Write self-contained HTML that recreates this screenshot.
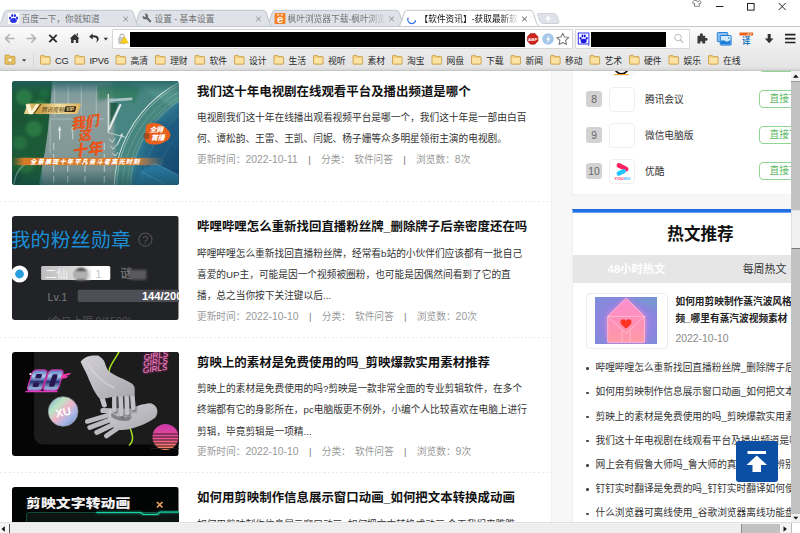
<!DOCTYPE html>
<html lang="zh-CN">
<head>
<meta charset="utf-8">
<title>软件资讯</title>
<style>
*{box-sizing:border-box;margin:0;padding:0}
html,body{width:800px;height:533px;overflow:hidden;background:#fff}
body{font-family:"Liberation Sans","Noto Sans CJK SC",sans-serif;position:relative;color:#222}
.abs{position:absolute}
/* ---------- browser chrome ---------- */
#chrome{position:absolute;left:0;top:0;width:800px;height:71px;background:#fff;z-index:10}
#tabstrip{position:absolute;left:0;top:0;width:800px;height:27px}
#toolbar{position:absolute;left:0;top:26px;width:800px;height:24px;background:linear-gradient(#fcfcfc,#ececec);border-top:1px solid #c4c8ce}
#bookmarks{position:absolute;left:0;top:50px;width:800px;height:21px;background:linear-gradient(#ebebeb 0%,#e4e4e4 85%,#d6d6d6 100%);border-bottom:1px solid #c6c6c6}
.tabtxt{position:absolute;top:12.800px;font-size:8.700px;line-height:12px;color:#727272;white-space:nowrap;overflow:hidden}
.bm{position:absolute;top:5px;font-size:8.8px;line-height:12px;color:#2a2a2a;white-space:nowrap}
.urlbox{position:absolute;top:2px;height:20px;background:#fff;border:1px solid #d6d6d6;border-radius:1px}
.redact{position:absolute;background:#000}
/* ---------- page ---------- */
#page{position:absolute;left:0;top:71px;width:791px;height:451px;background:#f7f7f7;overflow:hidden}
#main{position:absolute;left:0;top:0;width:552px;height:451px;background:#fff;border-right:1px solid #f0f0f0}
.item{position:absolute;left:0;width:552px;height:135.5px}
.item .thumb{position:absolute;left:12px;top:10px;width:166.500px;height:104px;border-radius:3px;overflow:hidden}
.item h3{position:absolute;left:197px;top:10.800px;font-size:12.45px;line-height:20px;font-weight:bold;color:#111;white-space:nowrap}
.item p{position:absolute;left:197px;top:36.100px;width:340px;font-size:9.7px;line-height:21.2px;color:#333;white-space:nowrap}
.item .meta{position:absolute;left:197px;font-size:9.7px;line-height:14px;color:#999;white-space:nowrap}
.item .meta i{font-style:normal;color:#777;margin:0 10.3px}
.item .meta b,.dn{font-weight:normal;font-size:10.4px}
.item .meta u{text-decoration:none;margin-left:1.5px}
.sep{position:absolute;left:0;width:551px;height:1px;background:repeating-linear-gradient(90deg,#ebebeb 0,#ebebeb 2.200px,#fff 2.200px,#fff 4.200px)}
/* sidebar */
#side1{position:absolute;left:571.500px;top:0;width:256.500px;height:124.300px;background:#fff;border-left:1px solid #f1f1f1;border-bottom:1px solid #f1f1f1}
#side2{position:absolute;left:571.500px;top:138px;width:256.500px;height:320px;background:#fff;border-left:1px solid #efefef;border-top:3px solid #1e6fe6}
.rk{position:absolute;left:13.500px;width:16px;height:16px;border-radius:3px;background:#d2d2d2;color:#666;font-size:10.300px;line-height:17.600px;text-align:center}
.ico{position:absolute;left:36.800px;width:25.500px;height:25.300px;border:1px solid #efefef;border-radius:4px;background:#fff}
.nm{position:absolute;left:72.500px;font-size:9.7px;line-height:14px;color:#333;white-space:nowrap}
.btn{position:absolute;left:186.500px;width:60px;height:17.700px;border:1px solid #8fd694;border-radius:4px;color:#5dbb63;font-size:9.700px;line-height:16px;padding-left:9.5px;white-space:nowrap;background:#fff}
.hl{position:absolute;left:23px;font-size:9.7px;line-height:14px;color:#333;white-space:nowrap}
.hl:before{content:"";position:absolute;left:-9.300px;top:6.200px;width:2.400px;height:2.400px;border-radius:50%;background:#444}
/* scrollbars */
#vsb{position:absolute;left:791px;top:71px;width:9px;height:451px;background:#f1f1f1}
#hsb{position:absolute;left:0;top:522px;width:800px;height:11px;background:#f4f4f4;border-top:1px solid #e0e0e0}
</style>
</head>
<body>
<div id="page">
 <div id="main">
  <div class="item" style="top:0px">
   <div class="thumb" id="t1"><svg width="100%" height="104" viewBox="0 0 166 104" preserveAspectRatio="none" style="display:block">
<defs>
<linearGradient id="t1road" x1="0" y1="0" x2="0" y2="1"><stop offset="0" stop-color="#76959a"/><stop offset=".25" stop-color="#8aa09e"/><stop offset=".7" stop-color="#829896"/><stop offset="1" stop-color="#668484"/></linearGradient>
<linearGradient id="t1gold" x1="0" y1="0" x2="1" y2="0"><stop offset="0" stop-color="#f3dc9a"/><stop offset=".25" stop-color="#c89b43"/><stop offset=".6" stop-color="#f3dea2"/><stop offset="1" stop-color="#d8b260"/></linearGradient>
<linearGradient id="t1ban" x1="0" y1="0" x2="1" y2="0"><stop offset="0" stop-color="#d97a26" stop-opacity="0"/><stop offset=".08" stop-color="#d97a26"/><stop offset=".8" stop-color="#dc7a2a"/><stop offset="1" stop-color="#c98a50" stop-opacity="0"/></linearGradient>
<linearGradient id="t1vig" x1="0" y1="0" x2="0" y2="1"><stop offset="0" stop-color="#1f5f60" stop-opacity=".75"/><stop offset=".12" stop-color="#1f5f60" stop-opacity="0"/><stop offset=".85" stop-color="#0f3f48" stop-opacity="0"/><stop offset="1" stop-color="#0f3f48" stop-opacity=".45"/></linearGradient>
<radialGradient id="t1blue" cx="222" cy="108" r="104" gradientUnits="userSpaceOnUse"><stop offset="0" stop-color="#123a62"/><stop offset=".6" stop-color="#174a70"/><stop offset=".85" stop-color="#1f5d80"/><stop offset=".96" stop-color="#2a708c"/><stop offset="1" stop-color="#3a8090"/></radialGradient>
<filter id="t1b1" x="-20%" y="-20%" width="140%" height="140%"><feGaussianBlur stdDeviation="1.6"/></filter>
<filter id="t1b2" x="-20%" y="-20%" width="140%" height="140%"><feGaussianBlur stdDeviation=".5"/></filter>
</defs>
<rect width="166" height="104" fill="#45807e"/>
<rect x="30" y="0" width="100" height="104" fill="url(#t1road)"/>
<!-- right upper greenish band -->
<path d="M100 0H166V60L120 104H104Z" fill="#478582" filter="url(#t1b1)"/>
<path d="M84 6c10-4 30-4 44 2l-6 14c-10-6-26-6-36-2z" fill="#2f7a58" opacity=".7" filter="url(#t1b1)"/>
<!-- lane markings -->
<g stroke="#c9dcd8" stroke-width=".7" opacity=".7"><path d="M42.500 4V36M56 4V34M69 4V34M84 4V36"/></g><g stroke="#dfeae6" stroke-width=".9" opacity=".8" stroke-dasharray="7 4"><path d="M41.600 62V104M55.600 84V104M72.800 84V104M92 62V104"/></g>
<g fill="#e6f0ee" opacity=".9"><path d="M47.500 45l1.800 4.500h-1.200v9h-1.200v-9h-1.200z"/><path d="M60.500 45l1.800 4.500h-1.200v9h-1.200v-9h-1.200z" opacity=".6"/><path d="M110 52l.8 4.200-1.200-.6-4.500 9-1-.6 4.500-9-1.200-.6z"/></g>
<path d="M38 38H92M38 39.500V72" stroke="#b7cfca" stroke-width=".8" fill="none" opacity=".8"/>
<!-- gantry -->
<path d="M96 13V52" stroke="#d9e6e2" stroke-width="1.300"/><path d="M96 18l24 -1.500v2.800l-24 1.500z" fill="#a9c4c6"/><path d="M97 48l11-24" stroke="#e4eee9" stroke-width="2" stroke-linecap="round"/><path d="M98 22l8 0-8 20z" fill="#14503a" opacity=".8"/>
<path d="M97 52l30 8" stroke="#c6dcd6" stroke-width=".8"/>
<g stroke="#e6f0ee" stroke-width=".9" fill="none" opacity=".85"><path d="M97 58l3 3 3-4M98 65l3 3 3-4M100 72l3 3 3-4M103 79l3 3 3-4"/></g>
<!-- blue disk & arcs -->
<circle cx="222" cy="108" r="120" fill="#47857f"/>
<path d="M120 0H166V30C150 20 135 10 120 0Z" fill="#5b9c92" opacity=".6" filter="url(#t1b1)"/>
<circle cx="222" cy="108" r="104" fill="url(#t1blue)"/>
<g fill="none" stroke="#d6e8e0"><circle cx="222" cy="108" r="120" stroke-width="1" opacity=".95"/><circle cx="222" cy="108" r="117.800" stroke-width=".6" opacity=".8"/><circle cx="222" cy="108" r="112" stroke-width=".5" opacity=".4"/><circle cx="222" cy="108" r="107" stroke-width=".5" opacity=".4"/><circle cx="222" cy="108" r="104" stroke-width=".7" stroke="#9cc8d0" opacity=".6"/><circle cx="222" cy="108" r="92" stroke-width=".5" stroke="#7db4c8" opacity=".4"/><circle cx="222" cy="108" r="78" stroke-width=".5" stroke="#7db4c8" opacity=".35"/></g>
<path d="M128 90l14-8 24 12v10H122z" fill="#2b7aa3" opacity=".8"/><path d="M142 82l24 12M128 90l26 14" stroke="#69b3cc" stroke-width=".6" opacity=".7"/>
<path d="M140 40c8-2 18 2 26 8v20c-10-2-20-8-28-16z" fill="#1b5a86" opacity=".5" filter="url(#t1b1)"/>
<!-- trees -->
<path d="M0 0H40C39 20 37 34 36 48C34 66 30 84 27 104H0Z" fill="#1f5a39" filter="url(#t1b2)"/>
<g filter="url(#t1b1)"><circle cx="12" cy="16" r="8" fill="#2b7a44"/><circle cx="28" cy="26" r="7" fill="#2b7c46"/><circle cx="6" cy="38" r="8" fill="#1a5334"/><circle cx="22" cy="48" r="8" fill="#2a7842"/><circle cx="8" cy="62" r="7" fill="#28703f"/><circle cx="26" cy="70" r="6" fill="#1c5a38"/><circle cx="14" cy="84" r="8" fill="#276e3e"/><circle cx="32" cy="12" r="5" fill="#1f6a40"/><circle cx="3" cy="98" r="7" fill="#194d38"/><circle cx="30" cy="40" r="4" fill="#1b5836"/></g>
<!-- bottom-left curved road -->
<path d="M2 104C3 92 8 84 20 80" stroke="#7fa69a" stroke-width="1.500" fill="none" opacity=".7"/>
<!-- gold logo -->
<path d="M15.500 22.500H69l-3.500 10.500H12z" fill="url(#t1gold)"/>
<path d="M13.500 23.200h4l2.200 6.500 4.200-6.500h3.600l-7 10h-3.600z" fill="#fff6d6"/><path d="M21 33l7-10h1.500l-7 10z" fill="#6b4a14"/>
<text x="29.500" y="30.800" font-size="6.200" font-style="italic" font-family="Liberation Sans,Noto Sans CJK SC,sans-serif" fill="#5a4315" textLength="22" lengthAdjust="spacingAndGlyphs">腾讯视频</text>
<rect x="52.500" y="25.300" width="11" height="5.600" rx="1" fill="#3b2d12" transform="skewX(-14) translate(7 0)"/><text x="54.200" y="30" font-size="4.600" font-weight="bold" font-style="italic" font-family="Liberation Sans,sans-serif" fill="#f5dfa0">VIP</text>
<!-- title -->
<g font-family="Liberation Sans,Noto Sans CJK SC,sans-serif" font-weight="900" fill="#e8541a" transform="rotate(-8 75 52)">
<text x="60" y="46" font-size="14" font-style="italic">我们</text><text x="65" y="58.500" font-size="13.500" font-style="italic">这</text><text x="57" y="74" font-size="15.500" font-style="italic">十年</text></g>
<!-- badge -->
<path d="M135 43c6-2 12-1 16 2 4 3 7 6 7 9s-3 6-8 8c-5 2-11 2-15 0-3-2-3-6-2-10s0-8 2-9z" fill="#e8601c"/><circle cx="134" cy="55" r="3" fill="#7a3a1a" opacity=".6"/>
<g font-family="Liberation Sans,Noto Sans CJK SC,sans-serif" font-weight="900" font-style="italic" fill="#fff" font-size="6.800"><text x="137" y="51.500">全网</text><text x="138.500" y="59">首播</text></g>
<!-- banner -->
<rect x="0" y="76.800" width="152" height="7.400" fill="url(#t1ban)"/>
<text x="18" y="83" font-size="6.300" font-weight="900" font-style="italic" font-family="Liberation Sans,Noto Sans CJK SC,sans-serif" fill="#fff" textLength="109" lengthAdjust="spacing">全景展现十年平凡奋斗者高光时刻</text>
<rect width="166" height="104" fill="url(#t1vig)"/>
</svg></div>
   <h3>我们这十年电视剧在线观看平台及播出频道是哪个</h3>
   <p>电视剧我们这十年在线播出观看视频平台是哪一个，我们这十年是一部由白百<br>何、谭松韵、王雷、王凯、闫妮、杨子姗等众多明星领衔主演的电视剧。</p>
   <div class="meta" style="top:82.300px">更新时间：<b>2022-10-11</b><i>|</i>分类： <u>软件问答</u><i>|</i>浏览数：<b>8</b>次</div>
  </div>
  <div class="sep" style="top:130px"></div>
  <div class="item" style="top:135.5px">
   <div class="thumb" id="t2" style="top:9.400px"><svg width="100%" height="104" viewBox="0 0 166 104" preserveAspectRatio="none" style="display:block">
<defs>
<linearGradient id="t2pill" x1="0" y1="0" x2="1" y2="0"><stop offset="0" stop-color="#bdbdbd"/><stop offset=".45" stop-color="#d6d6d6"/><stop offset=".75" stop-color="#ffffff"/><stop offset="1" stop-color="#ffffff"/></linearGradient>
<filter id="t2b" x="-20%" y="-20%" width="140%" height="140%"><feGaussianBlur stdDeviation=".9"/></filter>
</defs>
<rect width="166" height="104" fill="#222326"/>
<text x="-1.500" y="31.200" font-size="19.800" font-family="Liberation Sans,Noto Sans CJK SC,sans-serif" font-weight="400" fill="#1a8fd6" textLength="120" lengthAdjust="spacing">我的粉丝勋章</text>
<circle cx="133" cy="23.600" r="6.600" fill="none" stroke="#55565a" stroke-width="1"/><text x="133" y="27.600" font-size="11" font-family="Liberation Sans,sans-serif" fill="#55565a" text-anchor="middle">?</text>
<circle cx="7.500" cy="58" r="6.500" fill="#2a9fe0" stroke="#fff" stroke-width="4.200"/>
<g transform="translate(0 1.700)"><rect x="29" y="48.400" width="69" height="14" rx="1.500" fill="url(#t2pill)"/>
<text x="33" y="60" font-size="11.500" font-family="Liberation Sans,Noto Sans CJK SC,sans-serif" fill="#f4f4f4">二仙</text>
<ellipse cx="69" cy="57" rx="7" ry="7" fill="#3a3a3e" filter="url(#t2b)"/><rect x="62" y="53" width="16" height="9" fill="#d8d8d8" opacity=".75" filter="url(#t2b)"/>
<text x="83" y="60" font-size="11.500" font-family="Liberation Sans,sans-serif" fill="#c8c8c8">1</text>
<text x="108" y="60.500" font-size="12" font-family="Liberation Sans,Noto Sans CJK SC,sans-serif" fill="#8c8c8c">谜</text><rect x="117" y="52" width="17" height="10" fill="#5a5a5e" filter="url(#t2b)"/>
<text x="35.500" y="83" font-size="10.800" font-family="Liberation Sans,sans-serif" fill="#797a7e">Lv.1</text>
<rect x="65.500" y="72" width="110" height="12.400" rx="2" fill="#4e4f56"/>
<text x="129.500" y="82.300" font-size="11.200" font-weight="bold" font-family="Liberation Sans,sans-serif" fill="#fff">144/200</text>
<text x="35" y="107" font-size="10.500" font-family="Liberation Sans,Noto Sans CJK SC,sans-serif" fill="#505155">(今日上限 0/1500)</text>
</g></svg></div>
   <h3>哔哩哔哩怎么重新找回直播粉丝牌_删除牌子后亲密度还在吗</h3>
   <p>哔哩哔哩怎么重新找回直播粉丝牌，经常看b站的小伙伴们应该都有一批自己<br>喜爱的UP主，可能是因一个视频被圈粉，也可能是因偶然间看到了它的直<br>播，总之当你按下关注键以后...</p>
   <div class="meta" style="top:103.300px">更新时间：<b>2022-10-10</b><i>|</i>分类： <u>软件问答</u><i>|</i>浏览数：<b>20</b>次</div>
  </div>
  <div class="sep" style="top:265.5px"></div>
  <div class="item" style="top:271px">
   <div class="thumb" id="t3"><svg width="100%" height="104" viewBox="0 0 166 104" preserveAspectRatio="none" style="display:block">
<defs>
<linearGradient id="t3holo" x1="0" y1="0" x2="1" y2="1"><stop offset="0" stop-color="#7fa4d8"/><stop offset=".3" stop-color="#b9e6c4"/><stop offset=".5" stop-color="#f0b4c8"/><stop offset=".7" stop-color="#a9b8e8"/><stop offset="1" stop-color="#6f8fc0"/></linearGradient>
<linearGradient id="t3sun" x1="0" y1="0" x2="0" y2="1"><stop offset="0" stop-color="#c93aa8"/><stop offset=".5" stop-color="#ec4a96"/><stop offset="1" stop-color="#ff8a5a"/></linearGradient>
<linearGradient id="t380" x1="0" y1="0" x2="0" y2="1"><stop offset="0" stop-color="#5a78c0"/><stop offset=".3" stop-color="#a8c8e8"/><stop offset=".48" stop-color="#5a6fb0"/><stop offset=".55" stop-color="#27306e"/><stop offset=".85" stop-color="#8fb4dc"/><stop offset="1" stop-color="#b04ab8"/></linearGradient>
<linearGradient id="t3hand" x1="0" y1="0" x2="1" y2="1"><stop offset="0" stop-color="#d2d0d6"/><stop offset="1" stop-color="#a9a7ae"/></linearGradient>
<filter id="t3b" x="-30%" y="-30%" width="160%" height="160%"><feGaussianBlur stdDeviation=".8"/></filter>
</defs>
<rect width="166" height="104" fill="#050505"/>
<rect x="22" y="-10" width="160" height="102.500" rx="9" fill="#1c1c1d"/>
<!-- green curve top -->
<path d="M107 -1C104 6 98 12 97 18S96 24 95.500 26" stroke="#a6e31c" stroke-width="1.500" fill="none" stroke-linecap="round"/>
<path d="M117 74C119 80 121 84 120 88S118 92 117 93" stroke="#a6e31c" stroke-width="1.500" fill="none" stroke-linecap="round"/>
<!-- lower hand -->
<g stroke="#bdbbc2" stroke-linecap="round" fill="none"><path d="M100 62L75 69.500" stroke-width="4.600"/><path d="M100 67L77.500 75.500" stroke-width="4.800"/><path d="M102 72L84.500 80.500" stroke-width="4.800"/><path d="M107 75L94 84" stroke-width="4.600"/><path d="M106 59L90.500 58.500" stroke-width="5"/></g>
<path d="M97 57.500C104 55 114 57 121 56.500C124 54 128 52.500 133 52C136 51 139 51 141 52.500C145 55 146.500 60 143 65.500C138 69.500 132 72 127 74C121 76.500 112 78.500 105 78C100 76 96 70 96 64Z" fill="url(#t3hand)"/>
<path d="M99 61c5 4 13 5.500 21 3.500l-3 4c-6 1.200-13 0-18-3.500z" fill="#6a686f" opacity=".7"/>
<!-- upper hand -->
<g stroke="#4a484f" stroke-linecap="round" fill="none" opacity=".7" filter="url(#t3b)"><path d="M120.500 50L122 58" stroke-width="4.600"/><path d="M115 52L116 63" stroke-width="4.600"/><path d="M109 52L110 64" stroke-width="4.600"/><path d="M102.500 50L103 60" stroke-width="4.400"/></g>
<g stroke="#c4c2c9" stroke-linecap="round" fill="none"><path d="M119.500 38L121 56" stroke-width="4.600"/><path d="M114 40L115 61" stroke-width="4.600"/><path d="M108 40L109 62" stroke-width="4.600"/><path d="M102 40L102 58" stroke-width="4.400"/><path d="M88 40L92 53" stroke-width="5"/></g>
<path d="M68.400 9.800C70 7.500 72 6 74.200 4.900C78 3.600 82 3.200 85.900 3.500C88.500 5 90.500 7 91.800 8.800C93 12 94 15.500 95.700 18.500C99 21.500 103 23.500 107.400 25.400C111.500 27 115.500 29 119.100 31.200C121 32.500 122 34 122.300 36C122.500 39 122 42 121.500 44L100 45L90 47C88 47 87 46 85.900 44.900C83.500 42 81.500 38.500 80 35.100C78 30.500 76 26 74.200 21.500C72 17.500 70 13.500 68.400 9.800Z" fill="url(#t3hand)"/>
<path d="M76 12c5 9 13 18 26 24" stroke="#e9e7ec" stroke-width="1.400" fill="none" opacity=".5"/>
<path d="M117 42l.5 12M111.500 43l.3 14M105.300 43l.2 13" stroke="#7d7b83" stroke-width=".7" fill="none" opacity=".8"/>
<!-- 80 logo -->
<g transform="translate(21 17.800) skewX(-17)">
<rect x="0" y="0" width="15" height="21.500" rx="4.200" fill="url(#t380)" stroke="#c233a4" stroke-width="1.300"/>
<rect x="16" y="0" width="15" height="21.500" rx="4.200" fill="url(#t380)" stroke="#c233a4" stroke-width="1.300"/>
<rect x="4.500" y="4.300" width="6" height="4.200" rx="1.300" fill="#2a1650"/><rect x="4.500" y="12.600" width="6" height="4.600" rx="1.300" fill="#2a1650"/>
<rect x="20.800" y="4.500" width="5.400" height="12.500" rx="1.600" fill="#2a1650"/>
<path d="M-1 21.800h32" stroke="#e23ab8" stroke-width="1.400"/>
</g>
<path d="M50 22.500l9-1.800-2 2.300-5 1.200 4-.2-1.500 2-6 1z" fill="#f23aa8"/><circle cx="18.400" cy="22" r="1.100" fill="#fff"/>
<!-- holo -->
<circle cx="51" cy="59.500" r="14.800" fill="url(#t3holo)"/><circle cx="51" cy="59.500" r="14.800" fill="none" stroke="#8e8e96" stroke-width=".8"/>
<text x="51" y="64" font-size="11" font-weight="bold" font-family="Liberation Sans,sans-serif" fill="#fff" text-anchor="middle" transform="rotate(-12 51 60)">XU</text>
<!-- girls neon -->
<g font-family="Liberation Sans,sans-serif" font-size="8.200" font-style="italic" transform="rotate(-9 146 8)">
<g fill="#ff3fb0" opacity=".9" filter="url(#t3b)"><text x="132" y="6">GIRLS</text><text x="130.500" y="12.500">GIRLS</text><text x="129" y="19">GIRLS</text></g>
<g fill="#ff8ad0"><text x="132" y="6">GIRLS</text><text x="130.500" y="12.500">GIRLS</text><text x="129" y="19">GIRLS</text></g></g>
<!-- sun -->
<circle cx="153" cy="85" r="13" fill="url(#t3sun)"/>
<g stroke="#1c1c1d" stroke-width=".9"><path d="M138 82h30M138 85h30M138 88h30M138 91h30M138 94h30M138 96.500h30"/></g>
</svg></div>
   <h3>剪映上的素材是免费使用的吗_剪映爆款实用素材推荐</h3>
   <p>剪映上的素材是免费使用的吗?剪映是一款非常全面的专业剪辑软件，在多个<br>终端都有它的身影所在，pc电脑版更不例外，小编个人比较喜欢在电脑上进行<br>剪辑，毕竟剪辑是一项精...</p>
   <div class="meta" style="top:103.300px">更新时间：<b>2022-10-10</b><i>|</i>分类： <u>软件问答</u><i>|</i>浏览数：<b>9</b>次</div>
  </div>
  <div class="sep" style="top:401px"></div>
  <div class="item" style="top:406.5px">
   <div class="thumb" id="t4" style="top:9.700px"><svg width="100%" height="104" viewBox="0 0 166 104" preserveAspectRatio="none" style="display:block">
<defs><filter id="t4b" x="-20%" y="-50%" width="140%" height="200%"><feGaussianBlur stdDeviation="1.200"/></filter></defs>
<rect width="166" height="104" fill="#030504"/>
<rect x="14.500" y="25.500" width="160" height="60" rx="3" fill="#0d1512" stroke="#0d4a3a" stroke-width="1"/>
<path d="M84 25.500H128l3 2h14l2.500-2.500H168" stroke="#19c79a" stroke-width="2.400" fill="none" opacity=".55" filter="url(#t4b)"/>
<path d="M84 25.500H128l3 2h14l2.500-2.500H168" stroke="#1fd4a4" stroke-width="1" fill="none"/>
<text x="14" y="20.500" font-size="14.800" font-weight="900" font-family="Liberation Sans,Noto Sans CJK SC,sans-serif" fill="#f2f2f2" textLength="104" lengthAdjust="spacing" transform="translate(0 3.300) scale(1 .84)">剪映文字转动画</text>
<path d="M144.500 15l5.500 5.500M150 15l-5.500 5.500" stroke="#f2a256" stroke-width="1.700"/>
</svg></div>
   <h3>如何用剪映制作信息展示窗口动画_如何把文本转换成动画</h3>
   <p>如何用剪映制作信息展示窗口动画_如何把文本转换成动画,今天我们来瞧瞧</p>
  </div>
 </div>
 <div id="side1">
  <div class="ico" style="top:-20px"><svg width="23" height="23.300" viewBox="0 0 23 23.300" style="display:block">
<ellipse cx="11.500" cy="12.600" rx="7.600" ry="9.300" fill="#fff" stroke="#111" stroke-width="1.700"/>
<path d="M4.800 22.600h5.800M12.400 22.600h5.800" stroke="#f7a81b" stroke-width="1.400" stroke-linecap="round"/>
</svg></div>
  <div class="btn" style="top:-16.800px">直接下载</div>
  <div class="rk" style="top:20px">8</div><div class="ico" style="top:16px"></div><div class="nm" style="top:22px">腾讯会议</div><div class="btn" style="top:19.200px">直接下载</div>
  <div class="rk" style="top:56px">9</div><div class="ico" style="top:52px"></div><div class="nm" style="top:58px">微信电脑版</div><div class="btn" style="top:55.200px">直接下载</div>
  <div class="rk" style="top:92px">10</div><div class="ico" style="top:88px" id="youku"><svg width="23" height="23" viewBox="0 0 23 23" style="display:block">
<path d="M8.900 5.400L16.200 9" stroke="#ff1f5c" stroke-width="4.600" stroke-linecap="round"/>
<path d="M13.700 11.300L8.800 13.600" stroke="#1ec6ff" stroke-width="4.400" stroke-linecap="round"/>
<text x="4.300" y="20.300" font-size="4.400" font-weight="bold" font-family="Liberation Sans,sans-serif" fill="#ff1f5c" textLength="9.400" lengthAdjust="spacingAndGlyphs">YOU</text><text x="13.900" y="20.300" font-size="4.400" font-weight="bold" font-family="Liberation Sans,sans-serif" fill="#1eb4ff" textLength="6.200" lengthAdjust="spacingAndGlyphs">KU</text>
</svg></div><div class="nm" style="top:94px">优酷</div><div class="btn" style="top:91.200px">直接下载</div>
 </div>
 <div id="side2">
  <div class="abs" style="left:-1px;top:0;width:257px;height:1px;background:#6fa2ee"></div>
  <div class="abs" style="left:0;top:12px;width:256px;text-align:center;font-size:16.600px;line-height:22px;font-weight:bold;color:#111">热文推荐</div>
  <div class="abs" style="left:0;top:43px;width:256px;height:28px;background:#e6e6e6"></div>
  <div class="abs" style="left:0;top:43px;width:128px;height:28px;text-align:center;font-size:11.300px;line-height:28px;font-weight:bold;color:#fff">48小时热文</div>
  <div class="abs" style="left:128px;top:43px;width:128px;height:28px;text-align:center;font-size:10.9px;line-height:28px;color:#333">每周热文</div>
  <div class="abs" style="left:13px;top:81px;width:82.500px;height:56px;border:1px solid #ececec;border-radius:4px;background:#fff"><div id="t5" class="abs" style="left:8.300px;top:3.300px;width:62.500px;height:47px"><svg width="62.500" height="47" viewBox="0 0 62.500 47" style="display:block">
<defs>
<radialGradient id="t5bg" cx=".5" cy=".55" r=".75"><stop offset="0" stop-color="#c890e0"/><stop offset=".55" stop-color="#8f84e0"/><stop offset="1" stop-color="#7a8fd6"/></radialGradient>
<linearGradient id="t5env" x1="0" y1="0" x2="0" y2="1"><stop offset="0" stop-color="#fb8ed0"/><stop offset=".5" stop-color="#ff8fb8"/><stop offset="1" stop-color="#ff9aa6"/></linearGradient>
<filter id="t5b" x="-30%" y="-30%" width="160%" height="160%"><feGaussianBlur stdDeviation="2.200"/></filter>
</defs>
<rect width="62.500" height="47" fill="url(#t5bg)"/>
<path d="M31 0L62.500 0V14z" fill="#6fa0c8" opacity=".5" filter="url(#t5b)"/>
<path d="M31.100 1L50 19.400V45.500H12.500V19.400Z" fill="#ff8ac8" filter="url(#t5b)" opacity=".9"/>
<path d="M31.100 1.300L49.500 19.400V45.300H12.700V19.400Z" fill="url(#t5env)" stroke="#ffc4de" stroke-width=".8" stroke-linejoin="round"/>
<path d="M12.700 19.400H49.500M12.700 19.400L31.100 36.500L49.500 19.400M27.200 33V45.300M35.200 33V45.300" stroke="#ffc9dc" stroke-width=".7" fill="none"/>
<path transform="translate(0 1.300)" d="M31 30.300c-3-2.400-5.600-4.200-5.600-6.600 0-1.800 1.400-2.800 2.900-2.800 1.200 0 2.200.7 2.700 1.600.5-.9 1.500-1.600 2.700-1.600 1.500 0 2.900 1 2.900 2.800 0 2.400-2.600 4.200-5.600 6.600z" fill="#ff3424"/>
</svg></div></div>
  <div class="abs" style="left:103px;top:81.200px;font-size:9.700px;line-height:17.200px;font-weight:bold;color:#222;white-space:nowrap">如何用剪映制作蒸汽波风格视<br>频_哪里有蒸汽波视频素材</div>
  <div class="abs" style="left:103px;top:119.700px;font-size:9.700px;line-height:14px;color:#888"><span class="dn">2022-10-10</span></div>
  <div class="hl" style="top:149.2px">哔哩哔哩怎么重新找回直播粉丝牌_删除牌子后亲密度还在吗</div>
  <div class="hl" style="top:173.4px">如何用剪映制作信息展示窗口动画_如何把文本转换成动画</div>
  <div class="hl" style="top:197.6px">剪映上的素材是免费使用的吗_剪映爆款实用素材推荐</div>
  <div class="hl" style="top:221.8px">我们这十年电视剧在线观看平台及播出频道是哪个</div>
  <div class="hl" style="top:246.0px">网上会有假鲁大师吗_鲁大师的真假该如何辨别</div>
  <div class="hl" style="top:270.2px">钉钉实时翻译是免费的吗_钉钉实时翻译如何使用</div>
  <div class="hl" style="top:294.4px">什么浏览器可离线使用_谷歌浏览器离线功能盘点</div>
 </div>
 <div id="totop" class="abs" style="left:736px;top:370px;width:41.5px;height:40.5px;background:#0a4fa3;border-radius:3px">
  <svg class="abs" style="left:0;top:0" width="41.5" height="40.5" viewBox="0 0 41.5 40.5"><rect x="11.5" y="10" width="18.5" height="3" fill="#fff"/><path d="M20.75 14.5 L31 24 L25 24 L25 31 L16.5 31 L16.5 24 L10.5 24 Z" fill="#fff"/></svg>
 </div>
</div>
<div id="vsb">
 <div class="abs" style="left:0;top:10px;width:9px;height:433px;background:#c2c2c2"></div>
 <div class="abs" style="left:0;top:139px;width:9px;height:38.500px;background:#f0f0f0;border:1px solid #e2e2e2;border-bottom:1.500px solid #7a7a7a;border-right:0"></div>
 <div class="abs" style="left:0;top:10px;width:9px;height:1px;background:#9a9a9a"></div>
 <svg class="abs" style="left:0;top:0" width="9" height="451" viewBox="0 0 9 451"><path d="M2 6.800h5.600l-2.800-3.200z" fill="#111"/><path d="M2.300 445.800h5l-2.500 2.800z" fill="#111"/></svg>
</div>
<div id="hsb">
 <div class="abs" style="left:9px;top:1px;width:733px;height:10px;background:#eeeeee;border-left:1.500px solid #555;border-right:1.500px solid #8a8a8a"></div>
 <div class="abs" style="left:742px;top:1px;width:37.500px;height:10px;background:#c2c2c2"></div>
 <div class="abs" style="left:790.500px;top:0;width:9.500px;height:11px;background:#fff;border-left:1px solid #bbb"></div>
 <svg class="abs" style="left:0;top:0" width="800" height="11" viewBox="0 0 800 11"><path d="M4.800 3.200v5.600l-3.300-2.800z" fill="#111"/><path d="M783.500 3.200v5.600l3.300-2.800z" fill="#111"/></svg>
</div>
<div id="chrome">
 <div id="tabstrip"><svg class="abs" style="left:0;top:0" width="800" height="28" viewBox="0 0 800 28"><path d="M265 26.5 C268 26.5 268.6 24.0 269.4 21.5 L272 13.3 C272.8 10.9 274 10.3 276 10.3 L395.5 10.3 C397.5 10.3 398.7 10.9 399.5 13.3 L402.1 21.5 C402.9 24.0 403.5 26.5 406.5 26.5" fill="#dfe3e9" stroke="#bfc4cb" stroke-width="1"/><path d="M132 26.5 C135 26.5 135.6 24.0 136.4 21.5 L139 13.3 C139.8 10.9 141 10.3 143 10.3 L262.5 10.3 C264.5 10.3 265.7 10.9 266.5 13.3 L269.1 21.5 C269.9 24.0 270.5 26.5 273.5 26.5" fill="#dfe3e9" stroke="#bfc4cb" stroke-width="1"/><path d="M-3 26.5 C0 26.5 0.6000000000000001 24.0 1.4000000000000004 21.5 L4 13.3 C4.8 10.9 6 10.3 8 10.3 L129.5 10.3 C131.5 10.3 132.7 10.9 133.5 13.3 L136.1 21.5 C136.9 24.0 137.5 26.5 140.5 26.5" fill="#dfe3e9" stroke="#bfc4cb" stroke-width="1"/><path d="M538.5 13.5 L554 13.5 Q556 13.5 556.8 15.5 L559 22 Q559.5 23.5 557.5 23.5 L543 23.5 Q541 23.5 540.3 21.8 L537.6 15 Q537 13.5 538.5 13.5Z" fill="#dfe3e9" stroke="#c6cad0" stroke-width="0.8"/><path d="M548.2 15.8v5.4M545.5 18.5h5.4" stroke="#fff" stroke-width="1.6" fill="none"/><path d="M0 26.5H800" stroke="#c3c8cf" stroke-width="1"/><path d="M397 26.5 C400 26.5 400.6 24.0 401.4 21.5 L404 13.3 C404.8 10.9 406 10.3 408 10.3 L529.5 10.3 C531.5 10.3 532.7 10.9 533.5 13.3 L536.1 21.5 C536.9 24.0 537.5 26.5 540.5 26.5 L539 28 L397 28Z" fill="#fff" stroke="none"/><path d="M397 26.5 C400 26.5 400.6 24.0 401.4 21.5 L404 13.3 C404.8 10.9 406 10.3 408 10.3 L529.5 10.3 C531.5 10.3 532.7 10.9 533.5 13.3 L536.1 21.5 C536.9 24.0 537.5 26.5 540.5 26.5" fill="none" stroke="#bfc4ca" stroke-width="1"/><path d="M123.4 16.6l4.6 4.6M128.0 16.6l-4.6 4.6" stroke="#8a8f96" stroke-width="1" fill="none"/><path d="M256.2 16.6l4.6 4.6M260.8 16.6l-4.6 4.6" stroke="#8a8f96" stroke-width="1" fill="none"/><path d="M389.2 16.6l4.6 4.6M393.8 16.6l-4.6 4.6" stroke="#8a8f96" stroke-width="1" fill="none"/><path d="M522.2 16.6l4.6 4.6M526.8 16.6l-4.6 4.6" stroke="#555" stroke-width="1" fill="none"/><rect x="8" y="13" width="11" height="11" fill="#fff"/><g fill="#2b32e8"><ellipse cx="13.5" cy="20.6" rx="3.3" ry="2.5"/><ellipse cx="10" cy="18" rx="1.1" ry="1.5"/><ellipse cx="12.2" cy="15.5" rx="1.1" ry="1.5"/><ellipse cx="14.9" cy="15.5" rx="1.1" ry="1.5"/><ellipse cx="17" cy="18" rx="1.1" ry="1.5"/></g><path d="M145.600 16.700L150.200 21.300" stroke="#6a6a6a" stroke-width="2.100" stroke-linecap="round"/><circle cx="145.300" cy="16.400" r="2.800" fill="#6a6a6a"/><path d="M145.300 16.400l-3.200-1.300 1.900-1.900z" fill="#dfe3e9" stroke="#dfe3e9" stroke-width="1.100" stroke-linejoin="round"/><rect x="274.5" y="13" width="11" height="11" rx="1" fill="#f5832a"/><text x="280" y="23" font-size="11" font-weight="bold" font-family="Liberation Sans, sans-serif" fill="#fff" text-anchor="middle">e</text><rect x="277.5" y="14" width="1.5" height="1.5" fill="#fff"/><rect x="281" y="14" width="1.5" height="1.5" fill="#fff"/><path d="M408 18.2a4 4 0 0 0 7.6 2.6" stroke="#2b6de0" stroke-width="1.3" fill="none" stroke-linecap="round"/><path d="M716 6.5h7.5" stroke="#222" stroke-width="1"/><rect x="747.5" y="3.5" width="6.6" height="6.6" fill="none" stroke="#222" stroke-width="1"/><path d="M778.7 3l7 7M785.7 3l-7 7" stroke="#222" stroke-width="1"/><path d="M694.5 0.5l-2 1.5 1 1.8 1-.5v3h4.8v-3l1 .5 1-1.8-2-1.5a1.4 1 0 0 1-2.8 0z" fill="#fff" stroke="#555" stroke-width="0.7"/></svg>
  <div class="tabtxt" style="left:21.500px;width:98px">百度一下，你就知道</div>
  <div class="tabtxt" style="left:154.500px;width:98px">设置 - 基本设置</div>
  <div class="tabtxt" style="left:287.500px;width:98.500px;-webkit-mask-image:linear-gradient(90deg,#000 82%,transparent)">枫叶浏览器下载-枫叶浏览</div>
  <div class="tabtxt" style="left:419.500px;width:99.500px;color:#111;-webkit-mask-image:linear-gradient(90deg,#000 82%,transparent)">【软件资讯】-获取最新软件</div>
 </div>
 <div id="toolbar"><div class="urlbox" style="left:112px;width:460.500px"></div><div class="urlbox" style="left:575px;width:114.5px"></div><div class="redact" style="left:130px;top:5px;width:394.6px;height:14.5px"></div><div class="redact" style="left:590.6px;top:5px;width:75px;height:14.5px"></div><svg class="abs" style="left:0;top:-1px" width="800" height="24" viewBox="0 26 800 24"><path d="M14.500 38.500H5.500M9.700 34.300l-4.200 4.200 4.200 4.200" stroke="#b2b2b2" stroke-width="1.600" fill="none"/><path d="M26.500 38.500h9M31.300 34.300l4.200 4.200-4.200 4.200" stroke="#b2b2b2" stroke-width="1.600" fill="none"/><path d="M49.300 34.800l7.400 7.400M56.700 34.800l-7.400 7.400" stroke="#2e2e2e" stroke-width="1.900" fill="none"/><path d="M69.8 38.6l4.9-4.6 4.9 4.6h-1.3v4.3h-2.5v-2.8h-2.2v2.8h-2.5v-4.3z" fill="#333"/><rect x="76.6" y="33.4" width="1.3" height="2.4" fill="#333"/><path d="M92.5 33.6l-3.4 3.2 3.6 2.6v-2.1c3-.3 4.8 1 4.2 3.2-.2.9-.9 1.6-1.7 2.1 2.5-.6 3.8-2.3 3.5-4.3-.3-2.100-2.500-3.200-6-3z" fill="#333"/><path d="M103.600 37.800h4.400l-2.200 2.700z" fill="#333"/><g transform="translate(0 .9)"><rect x="118.500" y="36.800" width="7" height="6" rx="1" fill="#c9c9c9" stroke="#aaa" stroke-width=".5"/><path d="M120 37v-1.800a2 2 0 0 1 4 0v1.800" stroke="#b5b5b5" stroke-width="1.100" fill="none"/><path d="M124.400 35.800l3.900 6.400h-7.800z" fill="#ffd21a" stroke="#e0a800" stroke-width=".5"/></g><path d="M530.500 33.600h4.400l3.100 3.100v4.400l-3.100 3.100h-4.400l-3.100-3.100v-4.400z" fill="#cc241b" stroke="#9c1710" stroke-width=".6"/><text x="532.700" y="40.500" font-size="4.400" font-weight="bold" font-family="Liberation Sans, sans-serif" fill="#fff" text-anchor="middle">ABP</text><circle cx="548" cy="39" r="5.800" fill="#a4c6e8"/><path d="M549.300 35l-3.300 4.600h2l-1 3.900 3.500-5h-2.100z" fill="#fff"/><path d="M562.750 33.200l1.800 3.800 4.100.5-3 2.800.8 4.100-3.700-2-3.700 2 .8-4.100-3-2.800 4.100-.5z" fill="#fff" stroke="#7c7c7c" stroke-width="1.100" stroke-linejoin="round"/><rect x="578.300" y="33" width="10.600" height="11" fill="#fff" stroke="#2a2aff" stroke-width="1"/><g fill="#1a1ae0"><ellipse cx="583.600" cy="41" rx="3" ry="2.200"/><ellipse cx="580.600" cy="38.300" rx="1" ry="1.400"/><ellipse cx="582.500" cy="36" rx="1" ry="1.400"/><ellipse cx="584.800" cy="36" rx="1" ry="1.400"/><ellipse cx="586.700" cy="38.300" rx="1" ry="1.400"/></g><path d="M587.300 44.600h2.400l-1.200 1.500z" fill="#4a6fb0"/><circle cx="678" cy="37.500" r="3.300" fill="none" stroke="#bbb" stroke-width="1"/><path d="M680.400 40l2.800 2.800" stroke="#bbb" stroke-width="1.200"/><path d="M697.500 35.800h2.600c-.6-1.600.2-2.500 1.300-2.500s1.900.9 1.300 2.500h2.500v2.300c1.500-.6 2.500.1 2.500 1.200s-1 1.800-2.500 1.200v2.900h-3c.5-1.300-.1-2.100-.9-2.100s-1.400.8-.9 2.100h-2.900z" fill="#3a3a3a"/><rect x="717.300" y="32.500" width="10.400" height="9.200" rx=".6" fill="#8cc0f0" stroke="#2a86dc" stroke-width="1"/><rect x="720.300" y="35.500" width="10.800" height="9.600" rx=".6" fill="#d4e9fb" stroke="#1b7cd4" stroke-width="1"/><path d="M720.800 44.600v-3.600c1.800-1.600 3.300-.6 4.800.2s3.200.2 5-1.400v4.800z" fill="#1b7fd8"/><circle cx="728.600" cy="38" r=".8" fill="#1b7fd8"/><rect x="739.500" y="32.600" width="13.600" height="2.900" rx=".6" fill="#e8641a"/><rect x="747.500" y="33.400" width="1.600" height="1.200" fill="#fff" opacity=".85"/><rect x="749.800" y="33.400" width="1.600" height="1.200" fill="#fff" opacity=".85"/><text x="746.300" y="44.300" font-size="8.600" font-weight="bold" font-family="Liberation Sans, Noto Sans CJK SC, sans-serif" fill="#2a7ac0" text-anchor="middle">译</text><path d="M767.700 34h3v4.500h2.800l-4.300 4.800-4.300-4.800h2.800z" fill="#333"/><path d="M785 34.700h10.500M785 38.600h10.500M785 42.500h10.500" stroke="#222" stroke-width="1.700"/></svg></div>
 <div id="bookmarks"><svg class="abs" style="left:0;top:0" width="800" height="21" viewBox="0 49.500 800 21"><path d="M5 55.300q0-.8.8-.8h3.200l1 1.300h4.200q.8 0 .8.800v6.400q0 .8-.8.800h-8.400q-.8 0-.8-.8z" fill="#e8c25a" stroke="#b9923a" stroke-width=".7"/><path d="M10 56.600l.9 1.900 2 .2-1.500 1.400.4 2-1.800-1-1.800 1 .4-2-1.500-1.400 2-.2z" fill="#fff" stroke="#a8842e" stroke-width=".4"/><path d="M22 58.800h4.200l-2.100 2.500z" fill="#444"/><path d="M33.500 53v14" stroke="#d8d8d8" stroke-width="1"/><path d="M40.5 55.600q0-.7.7-.7h3l.9 1.200h4.300q.7 0 .7.7v6.200q0 .7-.7.7h-8.200q-.7 0-.7-.7z" fill="#f3cf7c" stroke="#c49a48" stroke-width=".8"/><path d="M41.2 57.500h8.200v5.200h-8.200z" fill="#fbe3a6"/><path d="M75 55.600q0-.7.7-.7h3l.9 1.200h4.300q.7 0 .7.7v6.200q0 .7-.7.7h-8.200q-.7 0-.7-.7z" fill="#f3cf7c" stroke="#c49a48" stroke-width=".8"/><path d="M75.7 57.500h8.200v5.200h-8.200z" fill="#fbe3a6"/><path d="M116 55.600q0-.7.7-.7h3l.9 1.200h4.300q.7 0 .7.7v6.200q0 .7-.7.7h-8.200q-.7 0-.7-.7z" fill="#f3cf7c" stroke="#c49a48" stroke-width=".8"/><path d="M116.7 57.500h8.200v5.200h-8.200z" fill="#fbe3a6"/><path d="M155.5 55.600q0-.7.7-.7h3l.9 1.200h4.300q.7 0 .7.7v6.200q0 .7-.7.7h-8.200q-.7 0-.7-.7z" fill="#f3cf7c" stroke="#c49a48" stroke-width=".8"/><path d="M156.2 57.500h8.200v5.200h-8.200z" fill="#fbe3a6"/><path d="M195 55.600q0-.7.7-.7h3l.9 1.200h4.300q.7 0 .7.7v6.200q0 .7-.7.7h-8.200q-.7 0-.7-.7z" fill="#f3cf7c" stroke="#c49a48" stroke-width=".8"/><path d="M195.7 57.500h8.200v5.200h-8.200z" fill="#fbe3a6"/><path d="M234.5 55.600q0-.7.7-.7h3l.9 1.200h4.300q.7 0 .7.7v6.200q0 .7-.7.7h-8.200q-.7 0-.7-.7z" fill="#f3cf7c" stroke="#c49a48" stroke-width=".8"/><path d="M235.2 57.500h8.200v5.200h-8.200z" fill="#fbe3a6"/><path d="M274 55.600q0-.7.7-.7h3l.9 1.200h4.300q.7 0 .7.7v6.200q0 .7-.7.7h-8.200q-.7 0-.7-.7z" fill="#f3cf7c" stroke="#c49a48" stroke-width=".8"/><path d="M274.7 57.500h8.200v5.200h-8.200z" fill="#fbe3a6"/><path d="M313.5 55.600q0-.7.7-.7h3l.9 1.200h4.300q.7 0 .7.7v6.200q0 .7-.7.7h-8.200q-.7 0-.7-.7z" fill="#f3cf7c" stroke="#c49a48" stroke-width=".8"/><path d="M314.2 57.500h8.200v5.200h-8.200z" fill="#fbe3a6"/><path d="M353 55.600q0-.7.7-.7h3l.9 1.200h4.300q.7 0 .7.7v6.200q0 .7-.7.7h-8.200q-.7 0-.7-.7z" fill="#f3cf7c" stroke="#c49a48" stroke-width=".8"/><path d="M353.7 57.500h8.200v5.200h-8.200z" fill="#fbe3a6"/><path d="M392.5 55.600q0-.7.7-.7h3l.9 1.200h4.300q.7 0 .7.7v6.200q0 .7-.7.7h-8.200q-.7 0-.7-.7z" fill="#f3cf7c" stroke="#c49a48" stroke-width=".8"/><path d="M393.2 57.500h8.200v5.200h-8.200z" fill="#fbe3a6"/><path d="M432 55.600q0-.7.7-.7h3l.9 1.200h4.300q.7 0 .7.7v6.200q0 .7-.7.7h-8.200q-.7 0-.7-.7z" fill="#f3cf7c" stroke="#c49a48" stroke-width=".8"/><path d="M432.7 57.500h8.200v5.200h-8.200z" fill="#fbe3a6"/><path d="M471.5 55.600q0-.7.7-.7h3l.9 1.200h4.300q.7 0 .7.7v6.200q0 .7-.7.7h-8.200q-.7 0-.7-.7z" fill="#f3cf7c" stroke="#c49a48" stroke-width=".8"/><path d="M472.2 57.500h8.200v5.200h-8.200z" fill="#fbe3a6"/><path d="M511 55.600q0-.7.7-.7h3l.9 1.200h4.300q.7 0 .7.7v6.200q0 .7-.7.7h-8.200q-.7 0-.7-.7z" fill="#f3cf7c" stroke="#c49a48" stroke-width=".8"/><path d="M511.7 57.500h8.200v5.200h-8.200z" fill="#fbe3a6"/><path d="M550.5 55.600q0-.7.7-.7h3l.9 1.200h4.300q.7 0 .7.7v6.200q0 .7-.7.7h-8.200q-.7 0-.7-.7z" fill="#f3cf7c" stroke="#c49a48" stroke-width=".8"/><path d="M551.2 57.500h8.200v5.200h-8.200z" fill="#fbe3a6"/><path d="M590 55.600q0-.7.7-.7h3l.9 1.200h4.300q.7 0 .7.7v6.200q0 .7-.7.7h-8.200q-.7 0-.7-.7z" fill="#f3cf7c" stroke="#c49a48" stroke-width=".8"/><path d="M590.7 57.500h8.200v5.200h-8.200z" fill="#fbe3a6"/><path d="M629.5 55.600q0-.7.7-.7h3l.9 1.200h4.300q.7 0 .7.7v6.200q0 .7-.7.7h-8.200q-.7 0-.7-.7z" fill="#f3cf7c" stroke="#c49a48" stroke-width=".8"/><path d="M630.2 57.500h8.200v5.200h-8.200z" fill="#fbe3a6"/><path d="M669 55.600q0-.7.7-.7h3l.9 1.200h4.300q.7 0 .7.7v6.200q0 .7-.7.7h-8.200q-.7 0-.7-.7z" fill="#f3cf7c" stroke="#c49a48" stroke-width=".8"/><path d="M669.7 57.500h8.200v5.200h-8.200z" fill="#fbe3a6"/><path d="M708.5 55.600q0-.7.7-.7h3l.9 1.200h4.300q.7 0 .7.7v6.200q0 .7-.7.7h-8.200q-.7 0-.7-.7z" fill="#f3cf7c" stroke="#c49a48" stroke-width=".8"/><path d="M709.2 57.500h8.200v5.200h-8.200z" fill="#fbe3a6"/></svg><div class="bm" style="left:55px;font-size:9.400px;letter-spacing:-.3px">CG</div><div class="bm" style="left:89.500px;font-size:9.400px;letter-spacing:-.3px">IPV6</div><div class="bm" style="left:130.5px">高清</div><div class="bm" style="left:170px">理财</div><div class="bm" style="left:209.5px">软件</div><div class="bm" style="left:249px">设计</div><div class="bm" style="left:288.5px">生活</div><div class="bm" style="left:328px">视听</div><div class="bm" style="left:367.5px">素材</div><div class="bm" style="left:407px">淘宝</div><div class="bm" style="left:446.5px">网盘</div><div class="bm" style="left:486px">下载</div><div class="bm" style="left:525.5px">新闻</div><div class="bm" style="left:565px">移动</div><div class="bm" style="left:604.5px">艺术</div><div class="bm" style="left:644px">硬件</div><div class="bm" style="left:683.5px">娱乐</div><div class="bm" style="left:723px">在线</div></div>
</div>
</body>
</html>
